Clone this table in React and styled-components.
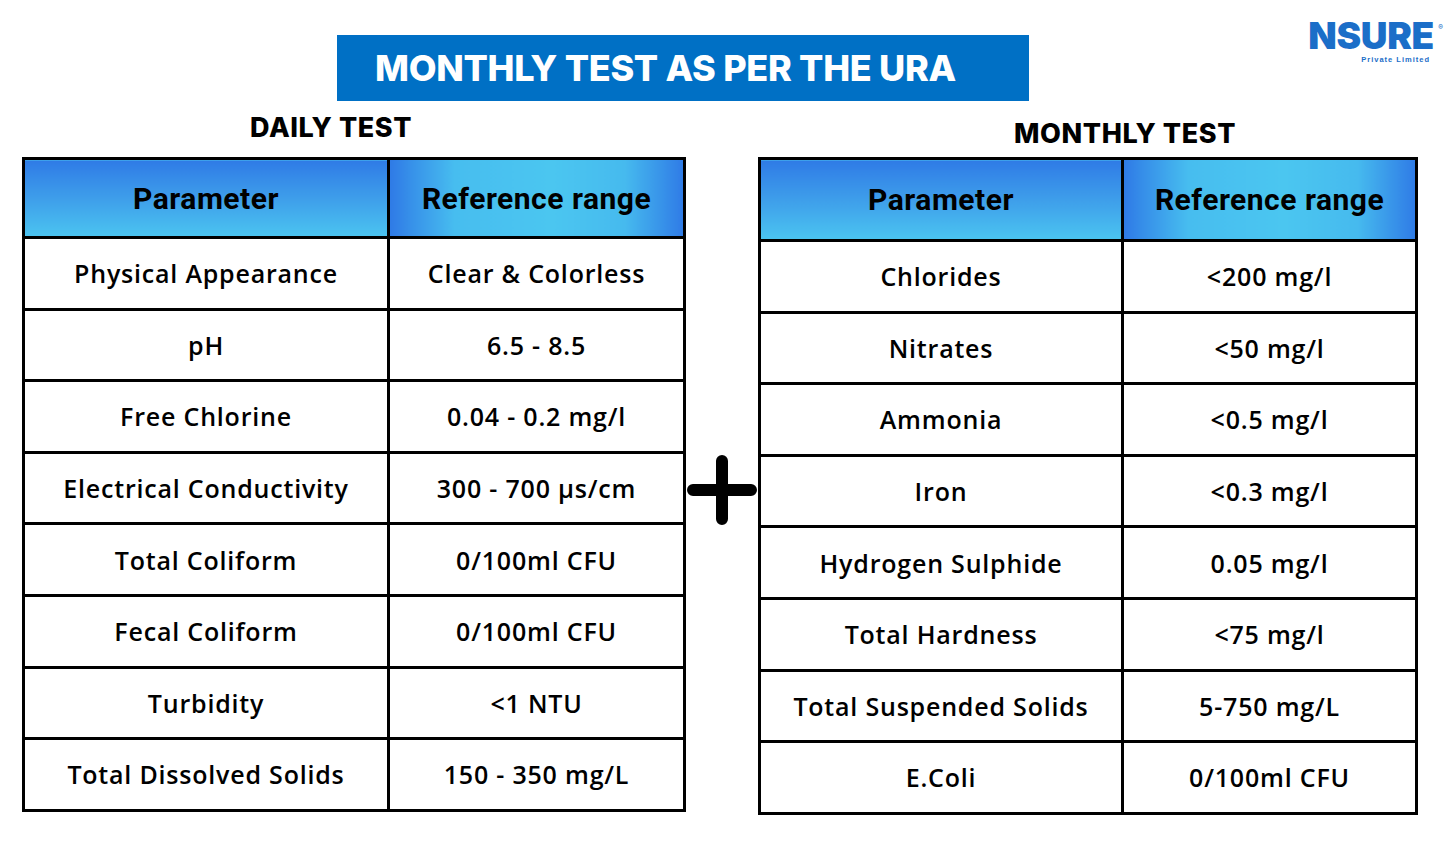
import React from 'react';
import styled, { createGlobalStyle } from 'styled-components';

const GlobalStyle = createGlobalStyle`
  html, body {
    margin: 0;
    padding: 0;
    background: #ffffff;
  }
  body {
    font-family: "Open Sans", "Liberation Sans", sans-serif;
    color: #000;
  }
`;

const Page = styled.div`
  width: 1449px;
  height: 845px;
  box-sizing: border-box;
  padding: 35px 31px 0 22px;
  position: relative;
  overflow: hidden;
`;

const TopRow = styled.div`
  display: flex;
  padding-left: 315px;
`;

const Banner = styled.div`
  width: 692px;
  height: 66px;
  background: #0070c5;
  display: flex;
  align-items: center;
  padding-left: 38px;
  box-sizing: border-box;
  color: #fff;
  font-family: Inter, "Liberation Sans", sans-serif;
  font-weight: 800;
  font-size: 36px;
  letter-spacing: -0.3px;
`;

const Logo = styled.div`
  position: absolute;
  top: 18px;
  right: 6px;
  width: 140px;
  display: flex;
  flex-direction: column;
  align-items: flex-end;
  color: #1b6ec8;
`;

const LogoMark = styled.div`
  font-family: Inter, "Liberation Sans", sans-serif;
  font-weight: 900;
  font-size: 37px;
  letter-spacing: -0.3px;
  line-height: 36px;
  height: 36px;
  position: relative;
  padding-right: 9px;

  sup {
    position: absolute;
    right: 0;
    top: 6px;
    font-size: 7px;
    line-height: 8px;
    letter-spacing: 0;
    font-weight: 700;
  }
`;

const LogoSub = styled.div`
  font-family: "Liberation Sans", sans-serif;
  font-size: 7.5px;
  line-height: 8px;
  font-weight: 700;
  letter-spacing: 1px;
  margin-top: 2px;
  padding-right: 13px;
`;

const Body = styled.div`
  display: grid;
  grid-template-columns: 664px 72px 660px;
  margin-top: 17px;
`;

const Section = styled.div`
  display: flex;
  flex-direction: column;
`;

const SubTitle = styled.div`
  height: 39px;
  padding-left: ${p => p.$indent}px;
  padding-top: ${p => p.$top}px;
  box-sizing: border-box;
  font-family: Inter, "Liberation Sans", sans-serif;
  font-weight: 800;
  font-size: 27px;
  letter-spacing: 0.6px;
  line-height: 18px;
`;

const Table = styled.table`
  border-collapse: collapse;
  width: 100%;
  table-layout: fixed;
`;

const HeadCell = styled.th`
  border: 3px solid #000;
  height: ${p => p.$h}px;
  padding: 0;
  font-family: Roboto, "Liberation Sans", sans-serif;
  font-weight: 700;
  font-size: 30px;
  letter-spacing: 0.5px;
  text-align: center;
  color: #000;
  background: ${p => p.$kind === 'range'
    ? 'linear-gradient(to right, #2f7be6 0%, #47bdef 22%, #4bc6f0 55%, #46baee 80%, #2f7be6 100%)'
    : 'linear-gradient(to bottom, #2f7be6 0%, #3e9eea 50%, #4bc4f0 100%)'};
`;

const Cell = styled.td`
  border: 3px solid #000;
  height: 68.6px;
  padding: 0;
  text-align: center;
  font-family: "Open Sans", "Liberation Sans", sans-serif;
  font-weight: 600;
  font-size: 25px;
  letter-spacing: 0.8px;
`;

const PlusWrap = styled.div`
  display: flex;
  justify-content: center;
  padding-top: 337px;
`;

const daily = [
  ['Physical Appearance', 'Clear & Colorless'],
  ['pH', '6.5 - 8.5'],
  ['Free Chlorine', '0.04 - 0.2 mg/l'],
  ['Electrical Conductivity', '300 - 700 µs/cm'],
  ['Total Coliform', '0/100ml CFU'],
  ['Fecal Coliform', '0/100ml CFU'],
  ['Turbidity', '<1 NTU'],
  ['Total Dissolved Solids', '150 - 350 mg/L'],
];

const monthly = [
  ['Chlorides', '<200 mg/l'],
  ['Nitrates', '<50 mg/l'],
  ['Ammonia', '<0.5 mg/l'],
  ['Iron', '<0.3 mg/l'],
  ['Hydrogen Sulphide', '0.05 mg/l'],
  ['Total Hardness', '<75 mg/l'],
  ['Total Suspended Solids', '5-750 mg/L'],
  ['E.Coli', '0/100ml CFU'],
];

function TestTable({ rows, headH, firstW }) {
  return (
    <Table>
      <colgroup>
        <col style={{ width: firstW }} />
        <col />
      </colgroup>
      <thead>
        <tr>
          <HeadCell $h={headH}>Parameter</HeadCell>
          <HeadCell $h={headH} $kind="range">Reference range</HeadCell>
        </tr>
      </thead>
      <tbody>
        {rows.map(([name, range]) => (
          <tr key={name}>
            <Cell>{name}</Cell>
            <Cell>{range}</Cell>
          </tr>
        ))}
      </tbody>
    </Table>
  );
}

export default function App() {
  return (
    <Page>
      <GlobalStyle />
      <TopRow>
        <Banner>MONTHLY TEST AS PER THE URA</Banner>
      </TopRow>
      <Logo>
        <LogoMark>NSURE<sup>®</sup></LogoMark>
        <LogoSub>Private Limited</LogoSub>
      </Logo>
      <Body>
        <Section>
          <SubTitle $indent={228} $top={1}>DAILY TEST</SubTitle>
          <TestTable rows={daily} headH={76} firstW={365} />
        </Section>
        <PlusWrap>
          <svg width="70" height="70" viewBox="0 0 70 70">
            <path d="M35 6 V64 M6 35 H64" stroke="#000" strokeWidth="12" strokeLinecap="round" />
          </svg>
        </PlusWrap>
        <Section>
          <SubTitle $indent={256} $top={7}>MONTHLY TEST</SubTitle>
          <TestTable rows={monthly} headH={79} firstW={363} />
        </Section>
      </Body>
    </Page>
  );
}
